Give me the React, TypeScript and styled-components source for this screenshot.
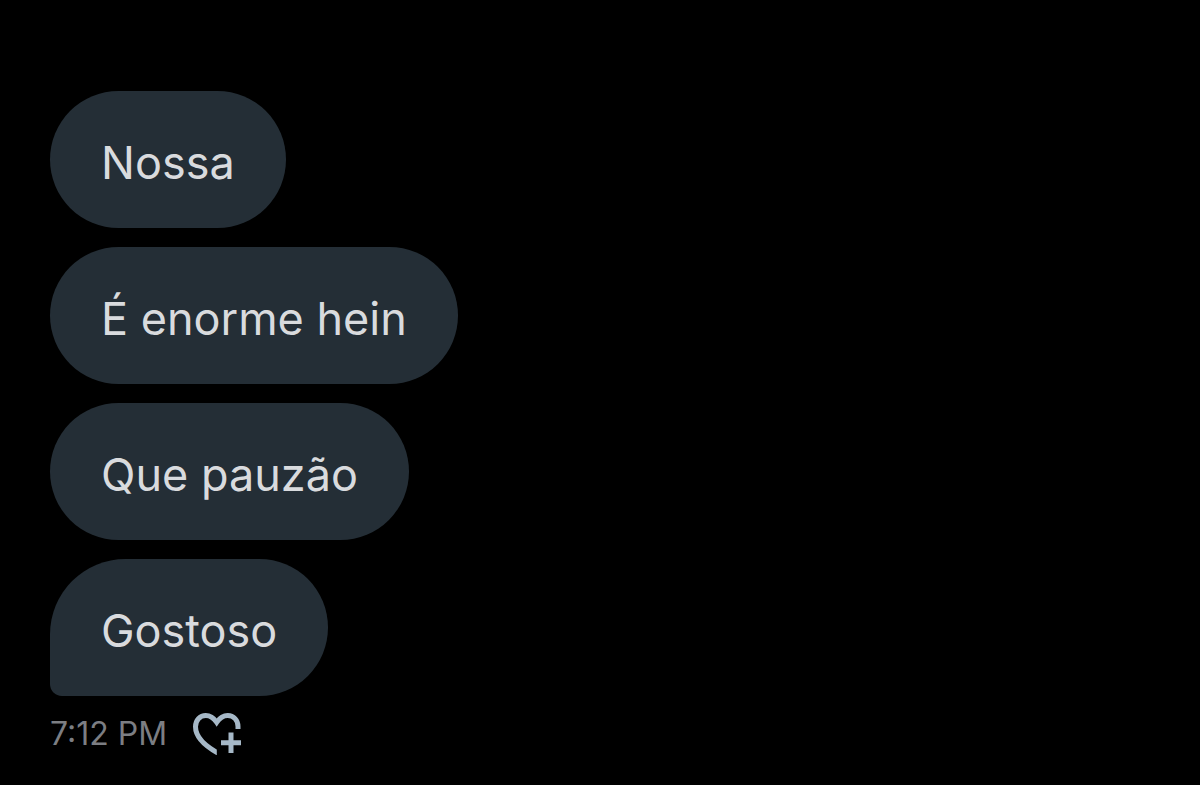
import React from "react";
import styled, { createGlobalStyle } from "styled-components";

const GlobalStyle = createGlobalStyle`
  body {
    margin: 0;
    background: #000;
    font-family: Inter, "Liberation Sans", Arial, sans-serif;
  }
`;

const Conversation = styled.main`
  display: flex;
  flex-direction: column;
  align-items: flex-start;
  padding: 91px 50px 28px;
`;

const MessageList = styled.ul`
  display: flex;
  flex-direction: column;
  align-items: flex-start;
  gap: 19px;
  margin: 0;
  padding: 0;
  list-style: none;
`;

const Bubble = styled.li<{ $last: boolean }>`
  padding: 43px 51px 37px;
  border-radius: ${({ $last }) => ($last ? "76px 69px 69px 12px" : "69px")};
  background: #242e36;
  color: #d9dbde;
  font-size: 45px;
  line-height: 57px;
  overflow-wrap: anywhere;
`;

const Meta = styled.footer`
  display: flex;
  align-items: center;
  gap: 26px;
  margin-top: 16px;
`;

const Time = styled.time`
  color: #7c7e83;
  font-size: 32px;
  line-height: 44px;
`;

const ReactButton = styled.button`
  display: flex;
  padding: 0;
  border: 0;
  background: none;
  color: #a6b8c7;
  cursor: pointer;
`;

const messages = ["Nossa", "É enorme hein", "Que pauzão", "Gostoso"];

function HeartPlus() {
  return (
    <svg width="48" height="42" viewBox="0 0 48 42" fill="none" stroke="currentColor" strokeWidth="5" aria-hidden="true">
      <clipPath id="heart-edge">
        <path d="M0 0H48V20H23.8V42H0Z" />
      </clipPath>
      <path
        clipPath="url(#heart-edge)"
        d="M45 16V13.5C45 7 40.6 2.6 34.7 2.6C30.2 2.6 26.6 5.2 23.7 9.3C20.8 5.2 17.2 2.6 12.8 2.6C6.8 2.6 2.5 7.3 2.5 13.8C2.5 23.5 10.5 32.5 27 41.2"
      />
      <path d="M28 29.8H48M38 19.6V40" />
    </svg>
  );
}

export default function App() {
  return (
    <>
      <GlobalStyle />
      <Conversation>
        <MessageList>
          {messages.map((text, i) => (
            <Bubble key={text} $last={i === messages.length - 1}>
              {text}
            </Bubble>
          ))}
        </MessageList>
        <Meta>
          <Time dateTime="19:12">7:12 PM</Time>
          <ReactButton type="button" aria-label="Add reaction">
            <HeartPlus />
          </ReactButton>
        </Meta>
      </Conversation>
    </>
  );
}
